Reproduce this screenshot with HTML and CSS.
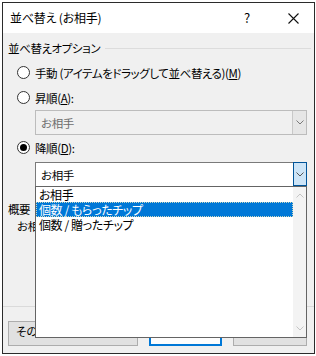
FILE: index.html
```html
<!DOCTYPE html>
<html>

<head>
	<meta charset="UTF-8">
	<title>並べ替え (お相手)</title>
	<link rel="stylesheet" href="styles.css">
</head>

<body>
	<section class="dialog">
		<div class="titlebar">
			<span class="title">並べ替え (お相手)</span>
			<span class="help">?</span>
			<span class="close">
				<svg width="11" height="11" viewBox="0 0 11 11"><path d="M0.5 0.5L10.5 10.5M10.5 0.5L0.5 10.5" stroke="#111" stroke-width="1.1" fill="none"/></svg>
			</span>
		</div>
		<div class="content">
			<div class="groupHead">
				<span>並べ替えオプション</span>
				<i class="rule"></i>
			</div>
			<label class="radioRow"><span class="radio"></span>手動 (アイテムをドラッグして並べ替える)(<u>M</u>)</label>
			<label class="radioRow"><span class="radio"></span>昇順(<u>A</u>):</label>
			<div class="combo disabled">
				<span class="value">お相手</span>
				<span class="arrow">
					<svg width="8" height="5" viewBox="0 0 8 5"><path d="M0.5 0.5L4 4L7.5 0.5" stroke="#7a7a7a" fill="none"/></svg>
				</span>
			</div>
			<label class="radioRow"><span class="radio checked"></span>降順(<u>D</u>):</label>
			<div class="comboWrap">
				<div class="combo open">
					<span class="value">お相手</span>
					<span class="arrow">
						<svg width="8" height="5" viewBox="0 0 8 5"><path d="M0.5 0.5L4 4L7.5 0.5" stroke="#555" fill="none"/></svg>
					</span>
				</div>
				<div class="dropdown">
					<ul>
						<li>お相手</li>
						<li class="active">個数 / もらったチップ</li>
						<li>個数 / 贈ったチップ</li>
					</ul>
					<div class="scroll">
						<svg width="8" height="5" viewBox="0 0 8 5"><path d="M0.5 4.5L4 1L7.5 4.5" stroke="#c4c4c4" fill="none"/></svg>
						<svg width="8" height="5" viewBox="0 0 8 5"><path d="M0.5 0.5L4 4L7.5 0.5" stroke="#c4c4c4" fill="none"/></svg>
					</div>
				</div>
			</div>
			<div class="summaryLabel">概要</div>
			<div class="summaryText">お相手</div>
		</div>
		<div class="sep"></div>
		<div class="buttons">
			<button class="btn more">その他のオプション(<u>R</u>)...</button>
			<button class="btn default">OK</button>
			<button class="btn">キャンセル</button>
		</div>
	</section>
</body>

</html>
```

FILE: styles.css
```css
body {
	margin: 0;
	padding: 2px 0 0 2px;
	background: #fff;
	font-family: "Noto Sans CJK JP", sans-serif;
	font-size: 11.5px;
	letter-spacing: -0.4px;
	font-feature-settings: "palt";
	color: #000;
}

.dialog {
	box-sizing: border-box;
	width: 313px;
	height: 352px;
	border: 1px solid #2b2b2b;
	background: #f0f0f0;
	display: flex;
	flex-direction: column;
}

.titlebar {
	height: 30px;
	background: #fff;
	display: flex;
	align-items: center;
	padding-left: 7px;
	flex-shrink: 0;
	font-size: 12px;
	letter-spacing: -0.2px;
}

.title {
	flex: 1;
	line-height: 16px;
}

.help {
	width: 14px;
	text-align: center;
	margin-right: 34px;
	font-size: 13px;
	line-height: 16px;
}

.close {
	display: flex;
	margin-right: 15px;
}

.content {
	flex: 1;
	padding: 0 7px 0 5px;
	line-height: 16px;
}

.groupHead {
	height: 24px;
	padding-top: 3px;
	display: flex;
	align-items: center;
}

.rule {
	flex: 1;
	height: 1px;
	margin: 1px -4px 0 5px;
	background: #dcdcdc;
}

.radioRow {
	height: 25px;
	display: flex;
	align-items: center;
	padding-left: 9px;
}

.radio {
	box-sizing: border-box;
	width: 13px;
	height: 13px;
	border: 1px solid #333;
	border-radius: 50%;
	background: #fff;
	margin-right: 5px;
	display: flex;
	align-items: center;
	justify-content: center;
}

.radio.checked::after {
	content: "";
	width: 7px;
	height: 7px;
	border-radius: 50%;
	background: #000;
}

.combo {
	box-sizing: border-box;
	margin-left: 27px;
	height: 25px;
	display: flex;
	align-items: stretch;
	border: 1px solid #bcbcbc;
}

.combo .value {
	flex: 1;
	display: flex;
	align-items: center;
	padding-left: 5px;
}

.combo .arrow {
	width: 13px;
	display: flex;
	align-items: center;
	justify-content: center;
}

.disabled {
	background: #f0f0f0;
	color: #6d6d6d;
}

.disabled .arrow {
	background: #e6e6e6;
	border-left: 1px solid #c8c8c8;
}

.comboWrap {
	position: relative;
	margin-top: 2px;
}

.open {
	height: 24px;
	background: #fff;
	border-color: #7a7a7a;
	border-right: none;
	border-bottom: none;
}

.open .arrow {
	width: 12px;
	margin-top: -1px;
	background: #cce4f7;
	border: 1px solid #005499;
}

.dropdown {
	position: absolute;
	left: 27px;
	right: 0;
	top: 24px;
	height: 152px;
	box-sizing: border-box;
	border: 1px solid #646464;
	background: #fff;
	display: flex;
	z-index: 2;
}

.dropdown ul {
	flex: 1;
	margin: 0;
	padding: 0;
	list-style: none;
}

.dropdown li {
	height: 15px;
	line-height: 15px;
	padding-left: 3px;
	box-sizing: border-box;
	font-size: 12px;
}

.dropdown li.active {
	background: #0078d7;
	color: #fff;
	outline: 1px dotted #c9d8c0;
	outline-offset: -1px;
}

.scroll {
	width: 13px;
	background: #f3f3f3;
	display: flex;
	flex-direction: column;
	justify-content: space-between;
	align-items: center;
	padding: 6px 0 6px;
}

.summaryLabel {
	margin-top: 15px;
}

.summaryText {
	margin-top: 1px;
	padding-left: 9px;
}

.sep {
	height: 1px;
	background: #dadada;
	flex-shrink: 0;
}

.buttons {
	display: flex;
	gap: 11px;
	padding: 14px 0 7px 5px;
	flex-shrink: 0;
}

.btn {
	box-sizing: border-box;
	height: 25px;
	width: 74px;
	background: #e1e1e1;
	border: 1px solid #adadad;
	font: inherit;
	padding: 0 0 6px;
	color: #000;
	white-space: nowrap;
	overflow: hidden;
	line-height: 14px;
}

.more {
	width: 130px;
	text-align: left;
	padding-left: 7px;
}

.default {
	width: 73px;
	background: #fdfdfd;
	border: 2px solid #0078d7;
}
```
